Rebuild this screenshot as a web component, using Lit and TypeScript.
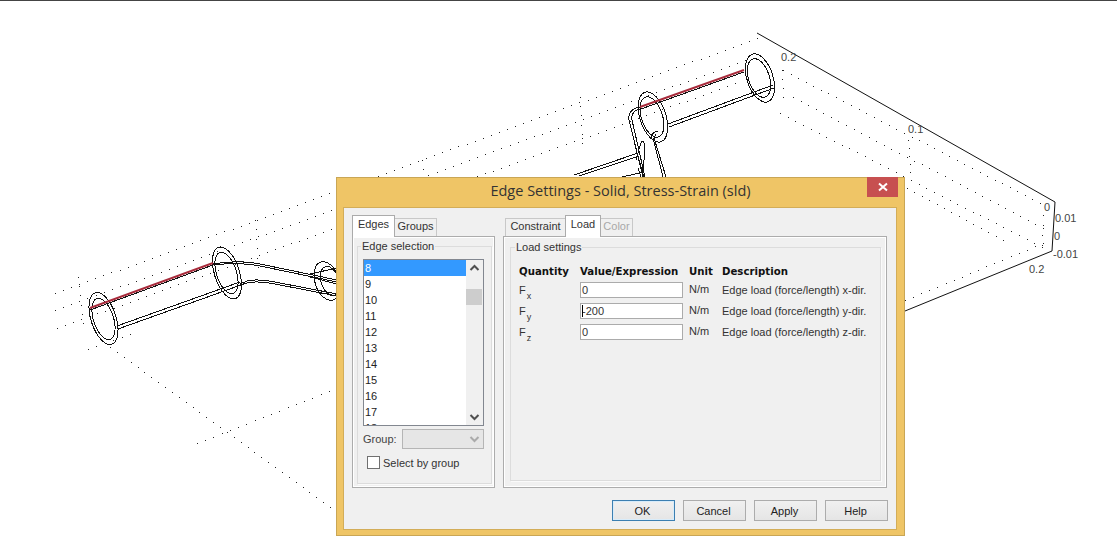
import { LitElement, html, css, svg } from "lit";
import { customElement } from "lit/decorators.js";

type Seg = [number, number, number, number];

const DOT_LINES: Seg[] = [
  [55, 293, 757, 38],
  [55, 310, 745, 60],
  [57, 328, 735, 83],
  [88, 349, 130, 334],
  [197, 443, 337, 388],
  [110, 347, 337, 512],
  [78, 277, 83, 323],
  [255, 220, 258, 267],
  [422, 160, 424, 178],
  [580, 97, 582, 143],
  [783, 70, 1040, 203],
  [793, 97, 1043, 228],
  [780, 113, 1042, 247],
  [907, 188, 1003, 240],
  [905, 300, 1043, 243],
  [1043, 215, 1042, 245],
  [908, 140, 910, 172],
  [782, 70, 783, 97],
];

function dotPath(lines: Seg[]): string {
  let d = "";
  for (const [x1, y1, x2, y2] of lines) {
    const len = Math.hypot(x2 - x1, y2 - y1);
    const n = Math.max(1, Math.round(len / 8.6));
    for (let i = 0; i <= n; i++) {
      const x = Math.round(x1 + ((x2 - x1) * i) / n);
      const y = Math.round(y1 + ((y2 - y1) * i) / n);
      d += `M${x} ${y}h1v1h-1z`;
    }
  }
  return d;
}

const RINGS: [number, number, number, number, number][] = [
  [103.5, 318.5, 12.5, 27, -18],
  [103.5, 319, 10, 21.5, -18],
  [227, 273, 12.5, 27, -18],
  [226.5, 273, 10, 21.5, -18],
  [327, 281, 12, 20, -18],
  [330, 281, 9, 15, -18],
  [760, 78, 13, 25, -18],
  [759, 78, 10.5, 20, -18],
  [653, 117, 13, 26, -18],
  [652, 117, 10.5, 21, -18],
];

const LINES: string[] = [
  "M90 310L213 265",
  "M117 326L240 282",
  "M118 329L241 285",
  "M213 264C230 261 245 261 260 264L337 280",
  "M213 265C230 263 245 263 260 266L337 282",
  "M240 284L247 281C255 279 265 280 275 282L337 294",
  "M240 285L247 283C255 281 265 282 275 284L337 296",
  "M310 274L337 268",
  "M310 277L337 284",
  "M641 109L744 72",
  "M668 124L773 85",
  "M669 127L774 88",
  "M640 107C632 108 628 113 629 120L643 177",
  "M641 109C634 110 631 114 632 120L645 177",
  "M656 134L654 138L666 177",
  "M653 138L663 177",
  "M658 131C653 132 651 135 651 138",
  "M636 160L640 146C641 140 644 140 645 146L644 160L642 177",
  "M638 168L641 177",
  "M639 160L644 177",
  "M574 175L638 153",
  "M579 176L639 156",
  "M622 177L644 172",
];

const LABELS: [string, number, number][] = [
  ["0.2", 781, 61],
  ["0.1", 908, 133],
  ["0", 1044, 211],
  ["0.01", 1055, 222],
  ["0", 1054, 240],
  ["-0.01", 1053, 258],
  ["0.2", 1029, 273],
];

const ROWS = ["8", "9", "10", "11", "12", "13", "14", "15", "16", "17", "18"];

const FIELDS = [
  { sym: "F", sub: "x", val: "0", caret: false, desc: "Edge load (force/length) x-dir." },
  { sym: "F", sub: "y", val: "-200", caret: true, desc: "Edge load (force/length) y-dir." },
  { sym: "F", sub: "z", val: "0", caret: false, desc: "Edge load (force/length) z-dir." },
];

@customElement("app-root")
export class AppRoot extends LitElement {
  static styles = css`
    :host {
      display: block;
      position: relative;
      width: 1117px;
      height: 536px;
      overflow: hidden;
      background: #fff;
      font-family: "Liberation Sans", Arial, sans-serif;
      font-size: 11px;
      color: #222;
    }
    .topline { height: 1px; background: #444; }
    .canvas { position: absolute; left: 0; top: 0; }
    .wire { shape-rendering: crispEdges; fill: none; stroke: #111; stroke-width: 1; }
    .axis-label { font: 11px "Liberation Sans", Arial, sans-serif; fill: #444; }

    .dialog {
      position: absolute;
      left: 336px;
      top: 177px;
      width: 569px;
      height: 359px;
      box-sizing: border-box;
      border: 1px solid #c9a655;
      background: #efc566;
      display: flex;
      flex-direction: column;
    }
    .titlebar {
      position: relative;
      height: 29px;
      flex: none;
      display: flex;
      justify-content: center;
      align-items: center;
      font: 14.5px "Open Sans", sans-serif;
      color: #333;
      padding-bottom: 4px;
      box-sizing: border-box;
    }
    .close {
      position: absolute;
      right: 6px;
      top: -1px;
      width: 31px;
      height: 20px;
      background: #c75050;
      display: flex;
      align-items: center;
      justify-content: center;
    }
    .body {
      margin: 0 7px 5px 6px;
      flex: 1;
      background: #f0f0f0;
      border: 1px solid #d3ad58;
      box-sizing: border-box;
      padding: 7px 8px 0 8px;
      display: flex;
      flex-direction: column;
    }
    .columns { display: flex; gap: 8px; align-items: flex-start; }
    .col-l { width: 143px; }
    .col-r { width: 384px; }
    .tabs {
      display: flex;
      align-items: flex-end;
      height: 21px;
      position: relative;
      z-index: 1;
    }
    .col-r .tabs { padding-left: 2px; }
    .tab {
      box-sizing: border-box;
      height: 18px;
      border: 1px solid #c8c8c8;
      border-bottom: none;
      background: #f0f0f0;
      display: flex;
      align-items: center;
      justify-content: center;
      padding-bottom: 3px;
      margin-right: -1px;
      color: #333;
    }
    .tab.active {
      height: 22px;
      margin-bottom: -1px;
      background: #fff;
      border-color: #ababab;
      padding-bottom: 6px;
      z-index: 1;
    }
    .tab.disabled { color: #a8a8a8; }
    .panel {
      box-sizing: border-box;
      height: 252px;
      border: 1px solid #acacac;
      background: #f0f0f0;
      box-shadow: inset 0 0 0 1px #fff;
    }
    .col-l .panel { padding: 3px 2px 3px 4px; }
    .col-r .panel { padding: 4px 5px 6px 6px; }
    fieldset {
      margin: 0;
      min-width: 0;
      box-sizing: border-box;
      height: 100%;
      border: 1px solid #dcdcdc;
      box-shadow: 1px 1px 0 #fafafa;
      padding: 0;
    }
    legend {
      padding: 0 1px;
      line-height: 13px;
      color: #333;
    }
    .col-l legend { margin-left: -2px; }
    .col-r legend { margin-left: -4px; }
    .col-l fieldset { padding: 6px 7px 0 5px; }
    .listbox {
      box-sizing: border-box;
      width: 121px;
      height: 167px;
      border: 1px solid #828790;
      background: #fff;
      display: flex;
      overflow: hidden;
    }
    .rows { flex: 1; overflow: hidden; }
    .row {
      height: 16px;
      line-height: 16px;
      padding-left: 1px;
      color: #222;
    }
    .row.sel { background: #3399ff; color: #fff; }
    .scroll {
      width: 17px;
      flex: none;
      background: #f0f0f0;
      display: flex;
      flex-direction: column;
      align-items: center;
      justify-content: space-between;
      position: relative;
    }
    .arrow { width: 17px; height: 16px; display: block; }
    .thumb {
      position: absolute;
      left: 0;
      top: 29px;
      width: 16px;
      height: 16px;
      background: #cdcdcd;
    }
    .grouprow {
      display: flex;
      align-items: center;
      justify-content: space-between;
      width: 121px;
      margin-top: 3px;
      height: 20px;
    }
    .combo {
      box-sizing: border-box;
      width: 82px;
      height: 20px;
      border: 1px solid #b5b5b5;
      background: #e6e6e6;
      display: flex;
      justify-content: flex-end;
      align-items: center;
    }
    .label-muted { color: #444; }
    .checkrow {
      display: flex;
      align-items: center;
      gap: 3px;
      margin: 7px 0 0 4px;
      height: 13px;
      color: #333;
    }
    .check {
      box-sizing: border-box;
      width: 13px;
      height: 13px;
      border: 1px solid #707070;
      background: #fff;
    }
    .col-r fieldset { padding: 8px 0 0 8px; }
    .grid {
      display: grid;
      grid-template-columns: 61px 109px 33px auto;
      grid-template-rows: 17px;
      grid-auto-rows: 21px;
      align-items: center;
      justify-content: start;
    }
    .grid .head {
      font: bold 10.2px "DejaVu Sans", sans-serif;
      color: #111;
      box-sizing: border-box;
      height: 17px;
      line-height: 17px;
      padding-top: 1px;
      align-self: start;
    }
    .sym { position: relative; color: #333; }
    .sym sub { font-size: 9px; line-height: 0; position: relative; top: 2px; vertical-align: sub; margin-left: 1px; }
    .input {
      box-sizing: border-box;
      width: 103px;
      height: 16px;
      border: 1px solid #ababab;
      background: #fff;
      line-height: 14px;
      padding-left: 1px;
      position: relative;
      color: #333;
    }
    .caret {
      position: absolute;
      left: 1px;
      top: 1px;
      width: 1px;
      height: 12px;
      background: #000;
    }
    .unit { color: #333; margin-top: -2px; }
    .desc { color: #333; white-space: nowrap; }
    .buttons {
      display: flex;
      justify-content: flex-end;
      gap: 8px;
      margin-top: 12px;
    }
    .btn {
      box-sizing: border-box;
      width: 63px;
      height: 21px;
      border: 1px solid #acacac;
      background: linear-gradient(#f0f0f0, #e5e5e5);
      display: flex;
      align-items: center;
      justify-content: center;
      padding-right: 2px;
      color: #222;
    }
    .btn.default {
      border-color: #3c7fb1;
      box-shadow: inset 0 0 0 1px #d8ecfa;
    }
  `;

  private chevron(up: boolean, color: string) {
    const d = up ? "M4.5 10L8.5 6L12.5 10" : "M4.5 6L8.5 10L12.5 6";
    return html`<svg class="arrow" viewBox="0 0 17 16">
      <path d=${d} fill="none" stroke=${color} stroke-width="2"></path>
    </svg>`;
  }

  private scene() {
    return html`<svg class="canvas" width="1117" height="536" viewBox="0 0 1117 536">
      <path d=${dotPath(DOT_LINES)} fill="#222"></path>
      ${RINGS.map(
        ([cx, cy, rx, ry, r]) => svg`<ellipse class="wire" cx=${cx} cy=${cy} rx=${rx} ry=${ry}
          transform=${`rotate(${r} ${cx} ${cy})`}></ellipse>`
      )}
      ${LINES.map((d) => svg`<path class="wire" d=${d}></path>`)}
      <path d="M90 308L213 263" stroke="#a82c3c" stroke-width="2" fill="none"></path>
      <path d="M640 107L744 70" stroke="#a82c3c" stroke-width="2" fill="none"></path>
      <path d="M757 33L1055 202L1052 251L905 311" stroke="#111" stroke-width="1" fill="none"></path>
      ${LABELS.map(
        ([t, x, y]) => svg`<text class="axis-label" x=${x} y=${y}>${t}</text>`
      )}
    </svg>`;
  }

  render() {
    return html`
      <div class="topline"></div>
      ${this.scene()}
      <div class="dialog">
        <div class="titlebar">
          Edge Settings - Solid, Stress-Strain (sld)
          <div class="close">
            <svg width="10" height="10" viewBox="0 0 10 10">
              <path d="M1 1.5L9 8.5M9 1.5L1 8.5" stroke="#fff" stroke-width="2" fill="none"></path>
            </svg>
          </div>
        </div>
        <div class="body">
          <div class="columns">
            <div class="col-l">
              <div class="tabs">
                <div class="tab active" style="width:43px">Edges</div>
                <div class="tab" style="width:43px">Groups</div>
              </div>
              <div class="panel">
                <fieldset>
                  <legend>Edge selection</legend>
                  <div class="listbox">
                    <div class="rows">
                      ${ROWS.map(
                        (r, i) => html`<div class="row ${i === 0 ? "sel" : ""}">${r}</div>`
                      )}
                    </div>
                    <div class="scroll">
                      ${this.chevron(true, "#505050")}
                      <div class="thumb"></div>
                      ${this.chevron(false, "#505050")}
                    </div>
                  </div>
                  <div class="grouprow">
                    <span class="label-muted">Group:</span>
                    <div class="combo">${this.chevron(false, "#aaaaaa")}</div>
                  </div>
                  <div class="checkrow">
                    <div class="check"></div>
                    <span>Select by group</span>
                  </div>
                </fieldset>
              </div>
            </div>
            <div class="col-r">
              <div class="tabs">
                <div class="tab" style="width:61px">Constraint</div>
                <div class="tab active" style="width:36px">Load</div>
                <div class="tab disabled" style="width:33px">Color</div>
              </div>
              <div class="panel">
                <fieldset>
                  <legend>Load settings</legend>
                  <div class="grid">
                    <div class="head">Quantity</div>
                    <div class="head">Value/Expression</div>
                    <div class="head">Unit</div>
                    <div class="head">Description</div>
                    ${FIELDS.map(
                      (f) => html`
                        <div class="sym">${f.sym}<sub>${f.sub}</sub></div>
                        <div class="input">${f.val}${f.caret ? html`<span class="caret"></span>` : ""}</div>
                        <div class="unit">N/m</div>
                        <div class="desc">${f.desc}</div>
                      `
                    )}
                  </div>
                </fieldset>
              </div>
            </div>
          </div>
          <div class="buttons">
            <div class="btn default">OK</div>
            <div class="btn">Cancel</div>
            <div class="btn">Apply</div>
            <div class="btn">Help</div>
          </div>
        </div>
      </div>
    `;
  }
}
